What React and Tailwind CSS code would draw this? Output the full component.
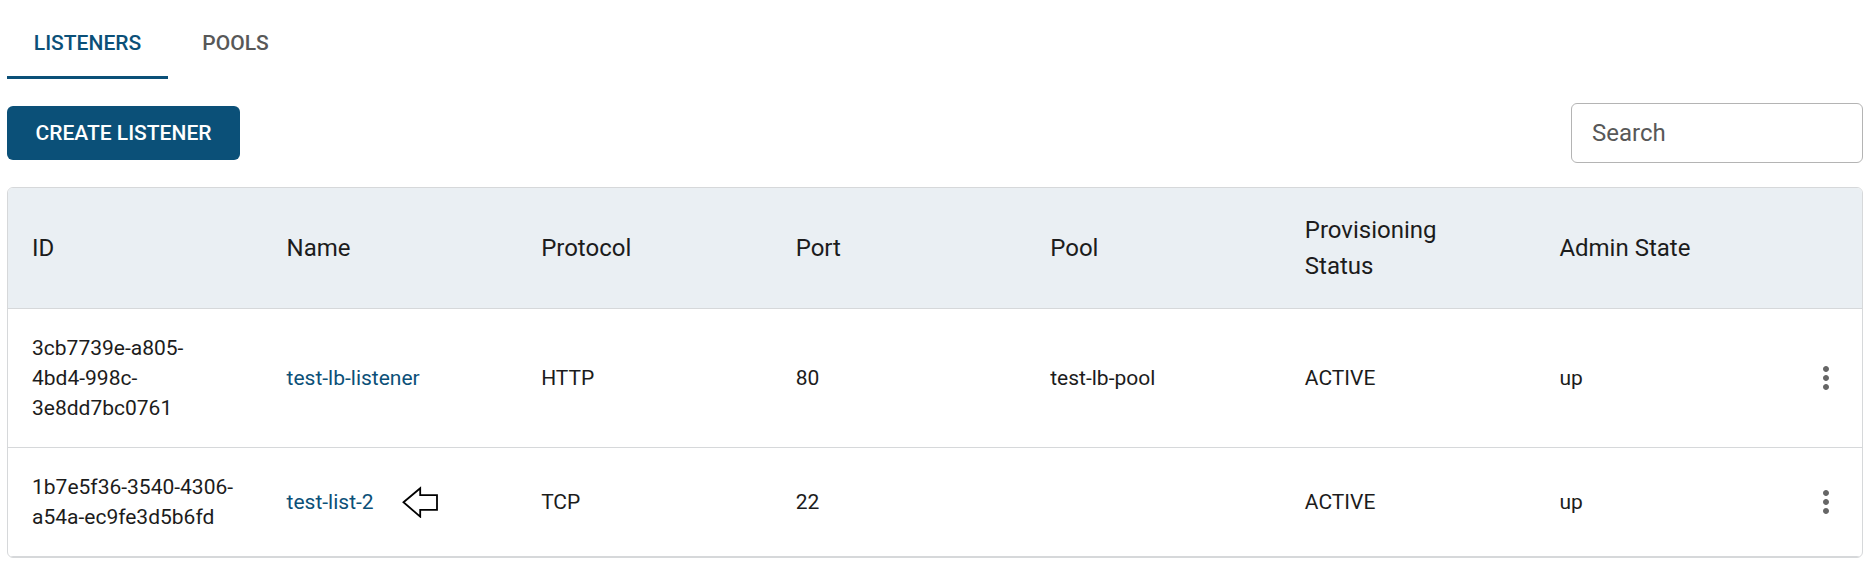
import { useState } from "react";

const tabs = [
  { label: "Listeners", width: "min-w-[161px]" },
  { label: "Pools", width: "min-w-[135px]" },
];

const columns = [
  ["ID"],
  ["Name"],
  ["Protocol"],
  ["Port"],
  ["Pool"],
  ["Provisioning", "Status"],
  ["Admin State"],
];

const listeners = [
  {
    id: ["3cb7739e-a805-", "4bd4-998c-", "3e8dd7bc0761"],
    name: "test-lb-listener",
    protocol: "HTTP",
    port: 80,
    pool: "test-lb-pool",
    status: "ACTIVE",
    admin: "up",
  },
  {
    id: ["1b7e5f36-3540-4306-", "a54a-ec9fe3d5b6fd"],
    name: "test-list-2",
    protocol: "TCP",
    port: 22,
    pool: "",
    status: "ACTIVE",
    admin: "up",
    marked: true,
  },
];

function ArrowLeft() {
  return (
    <svg className="shrink-0" width="36" height="32" viewBox="0 0 36 32" fill="none" stroke="#000" strokeWidth="1.8" aria-hidden="true">
      <path d="M1.5 16.3 L18.2 2.2 V9.2 H35 V23.8 H18.2 V30.6 Z" />
    </svg>
  );
}

function MoreVert() {
  return (
    <svg width="36" height="36" viewBox="0 0 24 24" fill="currentColor" aria-hidden="true">
      <path d="M12 8c1.1 0 2-.9 2-2s-.9-2-2-2-2 .9-2 2 .9 2 2 2m0 2c-1.1 0-2 .9-2 2s.9 2 2 2 2-.9 2-2-.9-2-2-2m0 6c-1.1 0-2 .9-2 2s.9 2 2 2 2-.9 2-2-.9-2-2-2" />
    </svg>
  );
}

function Lines({ parts }) {
  return parts.map((part) => (
    <span key={part} className="block whitespace-nowrap">
      {part}
    </span>
  ));
}

export default function App() {
  const [active, setActive] = useState("Listeners");
  const [query, setQuery] = useState("");
  const rows = listeners.filter((row) => row.name.includes(query));

  return (
    <main className="bg-white p-[7px] font-['Roboto',sans-serif] text-[21px] leading-[30px] text-[#1c1c1c]">
      <div role="tablist" className="flex">
        {tabs.map((tab) => (
          <button
            key={tab.label}
            type="button"
            role="tab"
            aria-selected={active === tab.label}
            onClick={() => setActive(tab.label)}
            className={`${tab.width} h-[72px] px-6 font-medium uppercase ${
              active === tab.label ? "text-[#0b5078] shadow-[inset_0_-3px_0_#0b5078]" : "text-[#585858]"
            }`}
          >
            {tab.label}
          </button>
        ))}
      </div>

      <div className="mt-6 flex items-center justify-between">
        <button type="button" className="h-[54px] min-w-[233px] rounded-md bg-[#0b5078] px-6 font-medium text-white uppercase">
          Create Listener
        </button>
        <input
          type="search"
          aria-label="Search"
          placeholder="Search"
          value={query}
          onChange={(event) => setQuery(event.target.value)}
          className="h-[60px] w-[292px] rounded-md border border-[#b4b4b4] px-5 text-2xl placeholder:text-[#585858]"
        />
      </div>

      <div className="mt-6 overflow-hidden rounded-md border border-[#d6d8da]">
        <table className="w-full table-fixed border-separate border-spacing-0 text-left">
          <thead className="bg-[#eaeff3] text-2xl leading-9">
            <tr>
              {columns.map((parts) => (
                <th key={parts[0]} scope="col" className="border-b border-[#d6d8da] p-6 font-normal">
                  <Lines parts={parts} />
                </th>
              ))}
              <th className="w-[72px] border-b border-[#d6d8da]" aria-label="Actions" />
            </tr>
          </thead>
          <tbody>
            {rows.map((row) => (
              <tr key={row.name} className="*:border-b *:border-[#d6d8da]">
                <td className="p-6">
                  <Lines parts={row.id} />
                </td>
                <td className="p-6">
                  <div className="flex items-center gap-7">
                    <a href="#listener" className="whitespace-nowrap text-[#0b5078]">
                      {row.name}
                    </a>
                    {row.marked && <ArrowLeft />}
                  </div>
                </td>
                <td className="p-6">{row.protocol}</td>
                <td className="p-6">{row.port}</td>
                <td className="p-6">{row.pool}</td>
                <td className="p-6">{row.status}</td>
                <td className="p-6">{row.admin}</td>
                <td>
                  <button type="button" aria-label={`Actions for ${row.name}`} className="mx-auto block text-[#666]">
                    <MoreVert />
                  </button>
                </td>
              </tr>
            ))}
          </tbody>
        </table>
      </div>
    </main>
  );
}
